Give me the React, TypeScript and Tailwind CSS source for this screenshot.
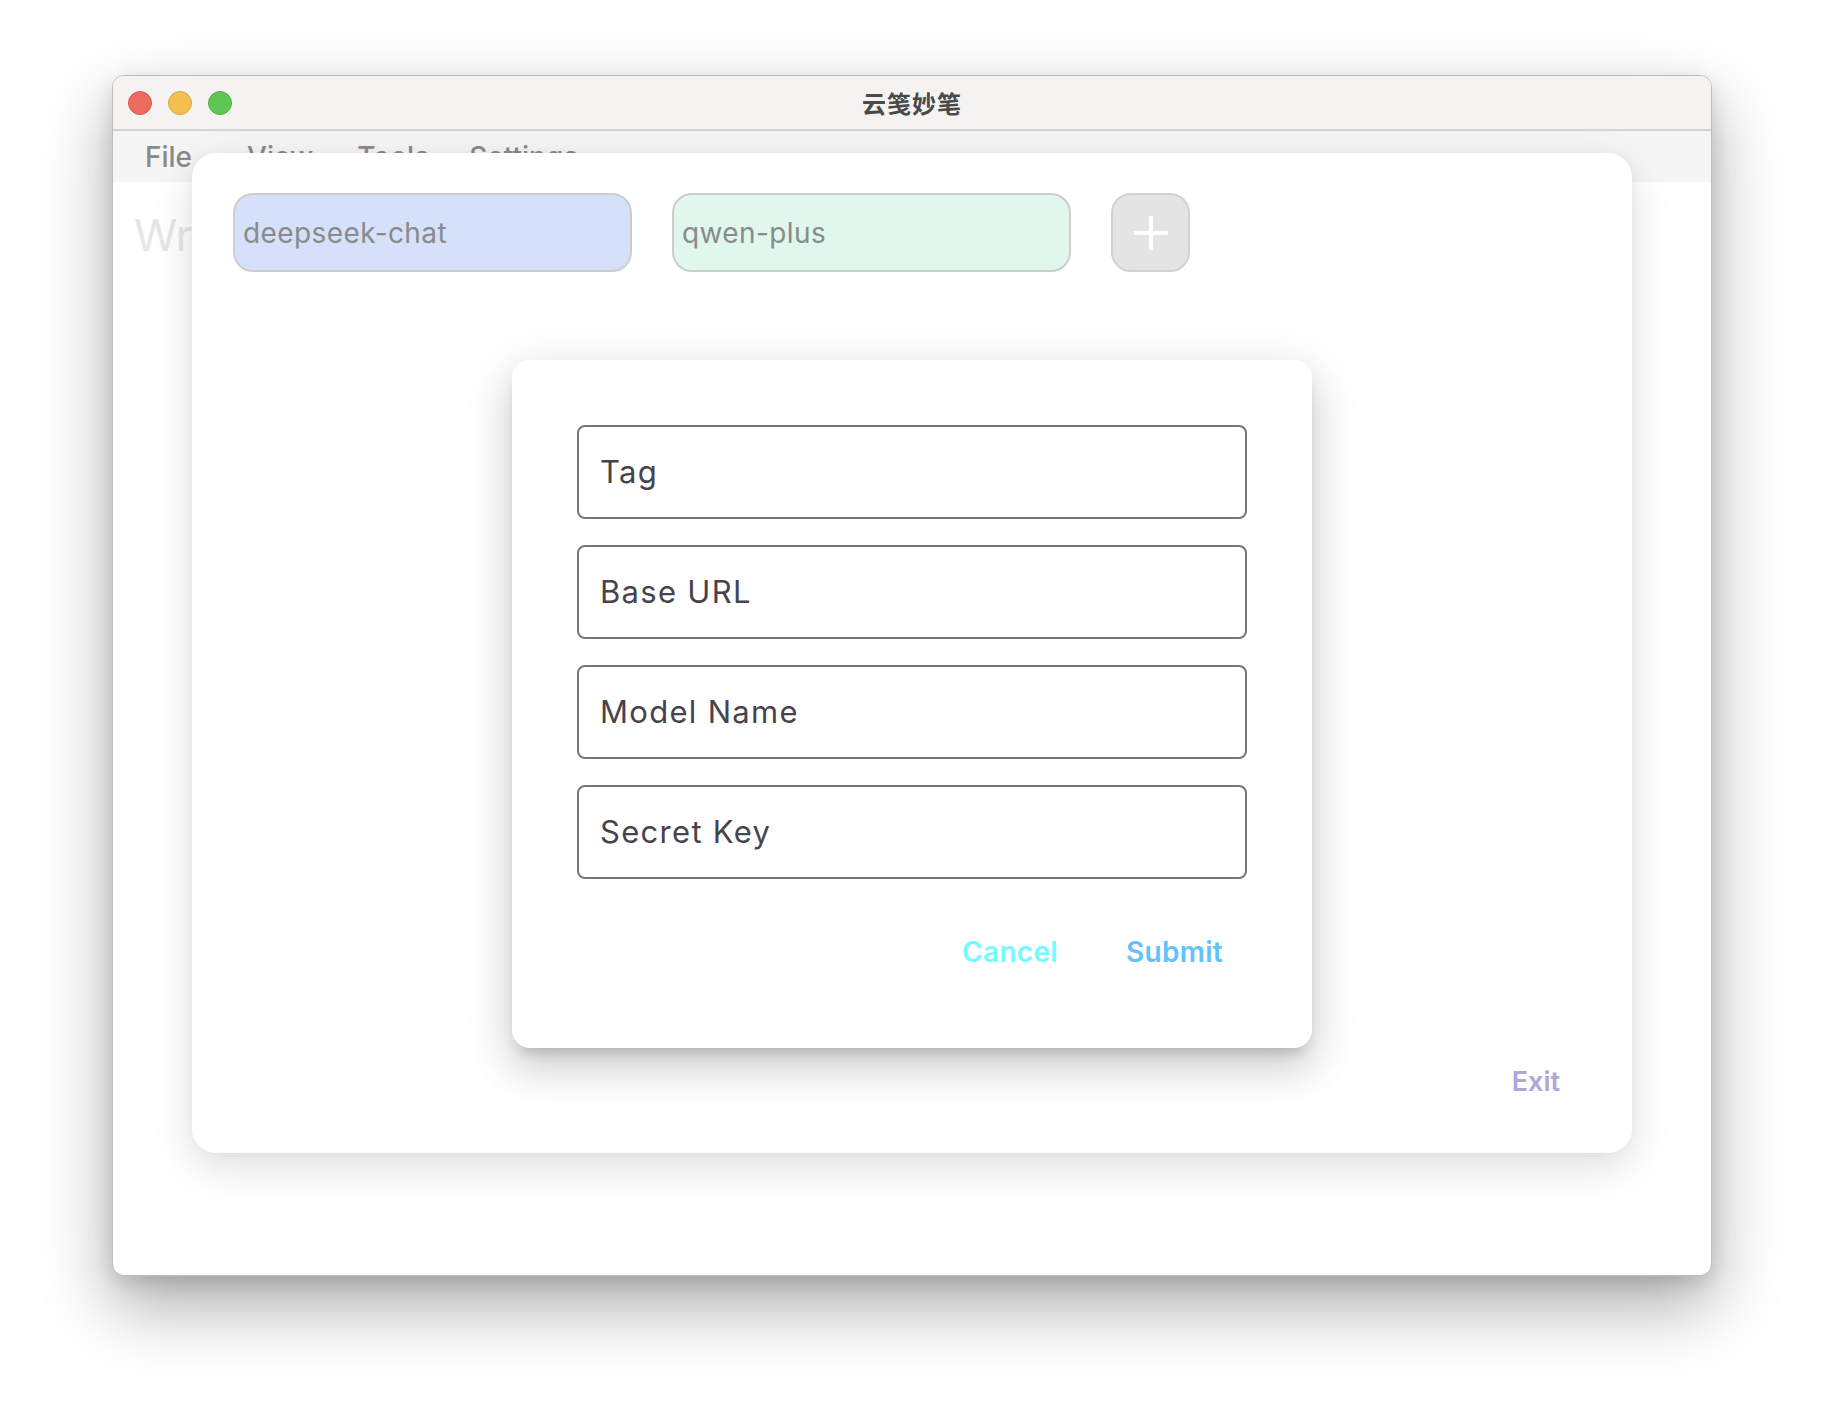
import React from "react";

const inter = "font-['Inter','Noto_Sans',sans-serif]";

function Chip({ label, bg }: { label: string; bg: string }) {
  return (
    <div
      className={`w-[399px] h-[79px] rounded-[20px] border-2 border-[#cdcdcd] ${bg} flex items-center pl-[8px] text-[28px] text-[#8a8a8a] tracking-[0.4px]`}
    >
      {label}
    </div>
  );
}

function Field({ label }: { label: string }) {
  return (
    <div className="h-[94px] rounded-[8px] border-2 border-[#77757b] flex items-center pl-[21px] pt-[1px] text-[31px] text-[#47434d] tracking-[1.3px]">
      {label}
    </div>
  );
}

export default function App() {
  return (
    <div className={`w-full h-[1424px] bg-white ${inter} overflow-hidden`}>
      <div className="pt-[75px] pl-[112px]">
        <div className="relative w-[1600px] h-[1201px] rounded-[12px] bg-white border border-[#bdbdbd] shadow-[0_30px_70px_rgba(0,0,0,0.33),0_8px_20px_rgba(0,0,0,0.12)] overflow-hidden">
          {/* title bar */}
          <div className="h-[55px] bg-[#f4f3f2] border-b-2 border-[#d3d3d3] flex items-center relative">
            <div className="flex items-center gap-[16px] pl-[15px]">
              <div className="w-[24px] h-[24px] rounded-full bg-[#ed6a5e] border border-[#d65a4f]" />
              <div className="w-[24px] h-[24px] rounded-full bg-[#f5bf4f] border border-[#dca63d]" />
              <div className="w-[24px] h-[24px] rounded-full bg-[#61c554] border border-[#4fae44]" />
            </div>
            <div className="flex-1" />
            <div className="absolute inset-0 flex items-center justify-center pointer-events-none">
              <span className="font-['Noto_Sans_CJK_SC',sans-serif] font-bold text-[24px] text-[#4a4a4a] tracking-[1px]">
                云笺妙笔
              </span>
            </div>
          </div>
          {/* menu bar */}
          <div className="h-[51px] bg-[#f5f5f5] flex items-center pl-[32px] text-[28px] font-medium text-[#8a8a8a]">
            <span className="mr-[55px]">File</span>
            <span className="mr-[44px]">View</span>
            <span className="mr-[40px]">Tools</span>
            <span>Settings</span>
          </div>
          {/* content */}
          <div className="ml-[21px] mt-[20px] w-[60px] overflow-hidden whitespace-nowrap text-[44px] text-[#e6e6e6]">
            Write something here...
          </div>

          {/* overlay sheet */}
          <div className="absolute left-[79px] top-[77px] w-[1440px] h-[1000px] rounded-[24px] bg-white shadow-[0_14px_40px_rgba(0,0,0,0.13),0_0_10px_rgba(0,0,0,0.04)] flex flex-col">
            <div className="flex items-center gap-[40px] pl-[41px] pt-[40px]">
              <Chip label="deepseek-chat" bg="bg-[#d5e0fb]" />
              <Chip label="qwen-plus" bg="bg-[#dff7ec]" />
              <div className="w-[79px] h-[79px] rounded-[20px] border-2 border-[#d2d2d2] bg-[#e4e4e4] flex items-center justify-center">
                <svg width="38" height="38" viewBox="0 0 38 38">
                  <path d="M19 2V36M2 19H36" stroke="#ffffff" strokeWidth="4" />
                </svg>
              </div>
            </div>

            <div className="mt-[88px] mx-auto w-[800px] h-[688px] rounded-[18px] bg-white shadow-[0_11px_15px_-7px_rgba(0,0,0,0.2),0_24px_38px_3px_rgba(0,0,0,0.1),0_9px_46px_8px_rgba(0,0,0,0.08)] px-[65px] pt-[65px] flex flex-col">
              <div className="flex flex-col gap-[26px]">
                <Field label="Tag" />
                <Field label="Base URL" />
                <Field label="Model Name" />
                <Field label="Secret Key" />
              </div>
              <div className="flex justify-end items-center gap-[68px] mt-[52px] pr-[24px] text-[28px] font-semibold tracking-[0.3px]">
                <button className="text-[#74fbff]">Cancel</button>
                <button className="text-[#62c2fb]">Submit</button>
              </div>
            </div>

            <div className="flex justify-end pr-[72px] mt-[14px]">
              <button className="text-[27px] font-semibold text-[#b1a6d6] h-[40px]">Exit</button>
            </div>
          </div>
        </div>
      </div>
    </div>
  );
}
